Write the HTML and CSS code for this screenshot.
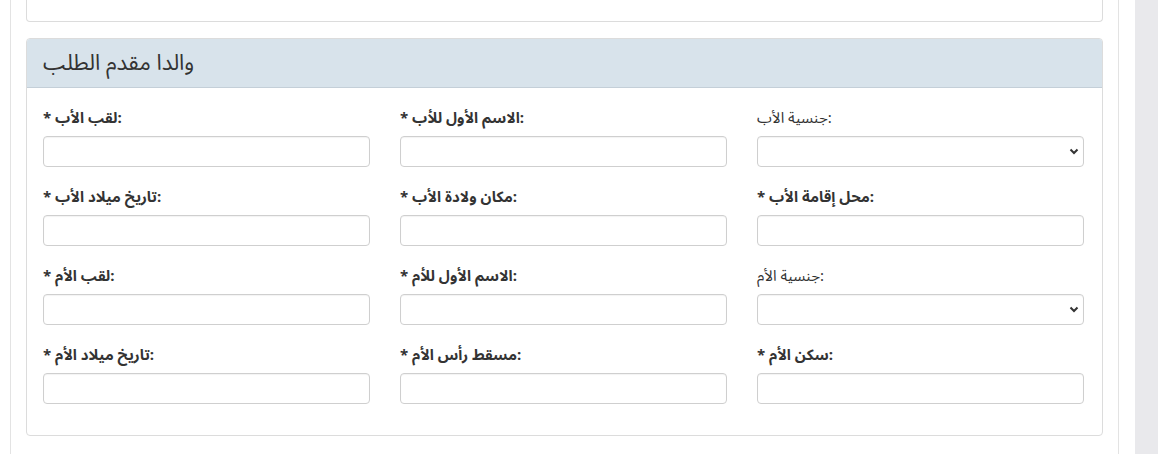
FILE: index.html
```html
<!DOCTYPE html>
<html lang="ar">
<head>
  <meta charset="UTF-8">
  <meta name="viewport" content="width=device-width, initial-scale=1.0">
  <title>بيانات والدي مقدم الطلب</title>
  <link rel="stylesheet" href="styles.css">
</head>
<body>
  <div class="main">
    <div class="panel panel-cut"></div>

    <div class="panel">
      <div class="panel-heading">والدا مقدم الطلب</div>
      <div class="panel-body">
        <div class="form-grid">
          <!-- الأب -->
          <div class="form-group">
            <label class="req">* لقب الأب:</label>
            <input type="text" class="form-control">
          </div>
          <div class="form-group">
            <label class="req">* الاسم الأول للأب:</label>
            <input type="text" class="form-control">
          </div>
          <div class="form-group">
            <label>جنسية الأب:</label>
            <div class="select-wrap">
              <select class="form-control"><option></option></select>
              <svg class="caret" width="10" height="7" viewBox="0 0 10 7"><path d="M1.5 1.5 5 5l3.5-3.5" fill="none" stroke="#333" stroke-width="2"/></svg>
            </div>
          </div>

          <div class="form-group">
            <label class="req">* تاريخ ميلاد الأب:</label>
            <input type="text" class="form-control">
          </div>
          <div class="form-group">
            <label class="req">* مكان ولادة الأب:</label>
            <input type="text" class="form-control">
          </div>
          <div class="form-group">
            <label class="req">* محل إقامة الأب:</label>
            <input type="text" class="form-control">
          </div>

          <!-- الأم -->
          <div class="form-group">
            <label class="req">* لقب الأم:</label>
            <input type="text" class="form-control">
          </div>
          <div class="form-group">
            <label class="req">* الاسم الأول للأم:</label>
            <input type="text" class="form-control">
          </div>
          <div class="form-group">
            <label>جنسية الأم:</label>
            <div class="select-wrap">
              <select class="form-control"><option></option></select>
              <svg class="caret" width="10" height="7" viewBox="0 0 10 7"><path d="M1.5 1.5 5 5l3.5-3.5" fill="none" stroke="#333" stroke-width="2"/></svg>
            </div>
          </div>

          <div class="form-group">
            <label class="req">* تاريخ ميلاد الأم:</label>
            <input type="text" class="form-control">
          </div>
          <div class="form-group">
            <label class="req">* مسقط رأس الأم:</label>
            <input type="text" class="form-control">
          </div>
          <div class="form-group">
            <label class="req">* سكن الأم:</label>
            <input type="text" class="form-control">
          </div>
        </div>
      </div>
    </div>
  </div>

  <div class="side"></div>
</body>
</html>
```

FILE: styles.css
```css
body {
  font-family: "Segoe UI", Tahoma, "Noto Sans Arabic", "DejaVu Sans", sans-serif;
  font-size: 15px;
  color: #333;
  margin: 0;
  padding: 0;
  background-color: #fff;
  display: flex;
  min-height: 100vh;
  overflow: hidden;
}

.main {
  width: 1077px;
  margin-left: 10px;
  padding: 0 15px;
  border-left: 1px solid #e3e3e3;
  border-right: 1px solid #e3e3e3;
}

.side {
  width: 23px;
  margin-left: auto;
  background-color: #e9e9ec;
}

.panel {
  background: white;
  border: 1px solid #dcdcdc;
  border-radius: 4px;
  margin-bottom: 16px;
}

/* bas du panneau précédent, coupé en haut */
.panel-cut {
  height: 21px;
  border-top: none;
  border-top-left-radius: 0;
  border-top-right-radius: 0;
}

.panel-heading {
  background-color: #d8e3eb;
  border-bottom: 1px solid #c4cfd8;
  border-radius: 3px 3px 0 0;
  height: 48px;
  line-height: 48px;
  padding: 0 16px;
  font-size: 22px;
  color: #333;
}

.panel-body {
  padding: 20px 18px 31px 16px;
}

.form-grid {
  display: grid;
  grid-template-columns: repeat(3, 1fr);
  column-gap: 30px;
  row-gap: 20px;
}

.form-group label {
  display: block;
  line-height: 20px;
  margin-bottom: 8px;
}

.form-group label.req {
  font-weight: bold;
}

.form-control {
  display: block;
  box-sizing: border-box;
  width: 100%;
  height: 31px;
  padding: 4px 10px;
  border: 1px solid #cfcfcf;
  border-radius: 4px;
  background: white;
  box-shadow: inset 0 1px 1px rgba(0, 0, 0, 0.05);
  font: inherit;
}

.select-wrap {
  position: relative;
}

select.form-control {
  appearance: none;
  -webkit-appearance: none;
}

.caret {
  position: absolute;
  right: 5px;
  top: 12px;
  pointer-events: none;
}
```
